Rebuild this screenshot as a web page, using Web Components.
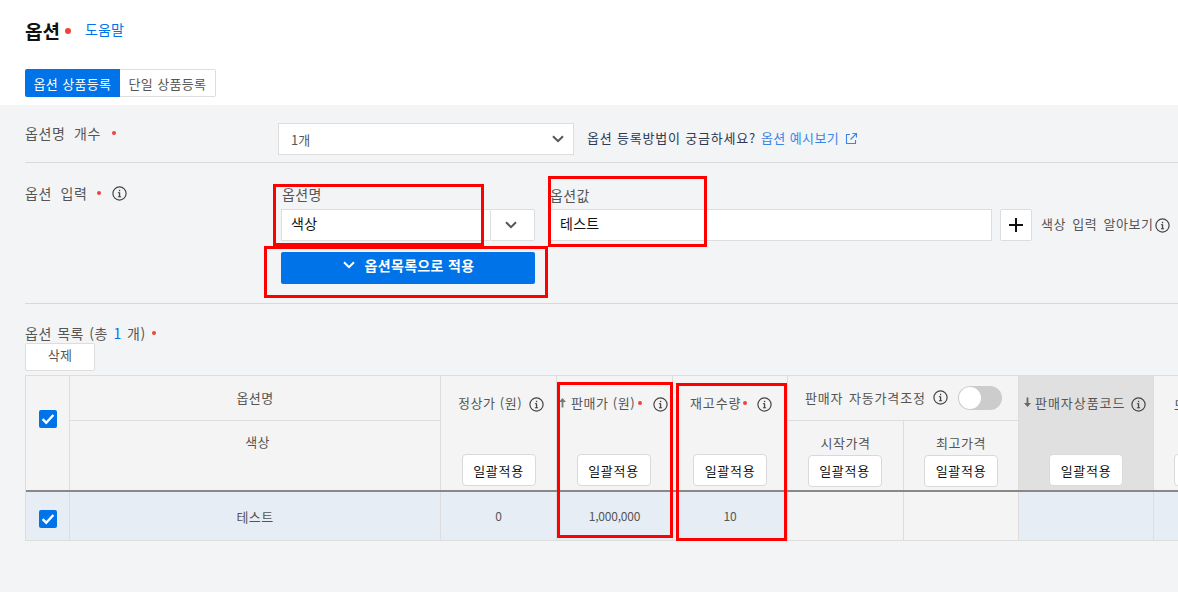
<!DOCTYPE html>
<html lang="ko"><head><meta charset="utf-8"><title>옵션</title>
<style>
html,body{margin:0;padding:0;background:#f3f4f6}
body{width:1178px;height:592px;overflow:hidden;font:13px "Noto Sans CJK KR","Noto Sans",sans-serif;color:#555}
</style></head><body>
<option-page></option-page>
<script>
const FONT='"Noto Sans CJK KR","Noto Sans",sans-serif';
function def(name,css,html){
  customElements.define(name,class extends HTMLElement{
    constructor(){super();const s=this.attachShadow({mode:'open'});
      s.innerHTML=`<style>${css}</style>${typeof html==='function'?html(this):html}`;}
  });
}
def('info-icon',':host{display:inline-flex;width:15px;height:15px;flex:none}svg{display:block}',
 `<svg width="15" height="15" viewBox="0 0 15 15" fill="none"><circle cx="7.5" cy="7.5" r="6.6" stroke="#444" stroke-width="1.2"/><rect x="6.9" y="6.4" width="1.3" height="4.6" fill="#444"/><rect x="6.9" y="3.8" width="1.3" height="1.4" fill="#444"/><rect x="5.9" y="6.2" width="1.6" height="1" fill="#444"/><rect x="5.9" y="10.3" width="3.2" height="1" fill="#444"/></svg>`);
def('red-dot',':host{display:inline-block;width:var(--d,4px);height:var(--d,4px);border-radius:50%;background:#f0443a;flex:none}','');
def('chev-icon',':host{display:inline-flex}svg{display:block}',
 e=>`<svg width="12" height="8" viewBox="0 0 12 8" fill="none"><path d="M1 1.2 6 6.2 11 1.2" stroke="${e.getAttribute('color')||'#555'}" stroke-width="2"/></svg>`);
def('check-box',':host{display:inline-flex;width:18px;height:18px;border-radius:2px;background:#0073e9;align-items:center;justify-content:center}svg{display:block}',
 `<svg width="14" height="12" viewBox="0 0 14 12" fill="none"><path d="M1.6 6.2 5.2 9.7 12.4 2" stroke="#fff" stroke-width="2.4"/></svg>`);
def('bulk-button',`:host{display:inline-flex;box-sizing:border-box;width:74px;height:32px;align-items:center;justify-content:center;background:#fff;border:1px solid #d9d9d9;border-radius:4px;color:#111;font-size:13px;letter-spacing:.7px;flex:none}`,'<slot></slot>');
def('page-header',`:host{display:block;background:#fff;height:105px;box-sizing:border-box;padding:17px 25px 0}
 .t{display:flex;align-items:center;height:28px}
 h1{margin:0;font-size:19px;font-weight:700;color:#111;line-height:28px}
 red-dot{--d:6px;margin:0 14px 0 5px}
 a{color:#0073e9;font-size:14px;text-decoration:none;letter-spacing:.15px;padding-bottom:4px}
 .tabs{display:flex;margin-top:24px;height:28px}
 .tabs div{box-sizing:border-box;height:28px;display:flex;align-items:center;justify-content:center;font-size:13px;letter-spacing:.35px}
 .on{width:95px;background:#0073e9;color:#fff;border-radius:2px 0 0 2px}
 .off{width:96px;background:#fff;color:#555;border:1px solid #ddd;border-left:0;border-radius:0 2px 2px 0}`,
 `<div class="t"><h1>옵션</h1><red-dot></red-dot><a>도움말</a></div>
  <div class="tabs"><div class="on">옵션 상품등록</div><div class="off">단일 상품등록</div></div>`);
def('count-row',`:host{display:grid;grid-template-columns:253px 296px auto;height:58px;box-sizing:border-box;margin-left:25px;padding-top:18px;border-bottom:1px solid #d9d9d9}
 .l{display:flex;align-items:flex-start;height:20px;line-height:20px;font-size:14px;letter-spacing:.6px;word-spacing:4px;color:#555}
 .l red-dot{margin:8px 0 0 11px}
 .sel{box-sizing:border-box;height:32px;background:#fff;border:1px solid #ddd;display:flex;align-items:center;justify-content:space-between;padding:0 9px 0 12px;color:#555}
 .h{display:flex;align-items:center;height:32px;box-sizing:border-box;padding-bottom:3px;margin-left:13px;color:#2c3a55;letter-spacing:.8px;white-space:nowrap}
 .h a{color:#3a86e8;margin-left:5px;letter-spacing:.4px}
 .h svg{margin:2px 0 0 6px}`,
 `<div class="l">옵션명 개수<red-dot></red-dot></div>
  <div class="sel">1개<chev-icon></chev-icon></div>
  <div class="h">옵션 등록방법이 궁금하세요?<a>옵션 예시보기</a><svg width="13" height="13" viewBox="0 0 13 13" fill="none" stroke="#3a86e8" stroke-width="1.1"><path d="M5 2.5H1.5V11.5H10.5V8"/><path d="M5.5 7.5 11.5 1.5M7.5 1.5H11.5V5.5"/></svg></div>`);
def('input-row',`:host{display:block;height:141px;box-sizing:border-box;margin-left:25px;border-bottom:1px solid #d9d9d9}
 .g{display:grid;grid-template-columns:256px 209px 45px 15px 442px 8px 32px auto;grid-template-rows:46px 32px 11px 32px}
 .l{grid-column:1;grid-row:1 / 3;display:flex;align-items:flex-start;padding-top:20px;height:20px;line-height:20px;font-size:14px;letter-spacing:.6px;word-spacing:4px}
 .l red-dot{margin:8px 0 0 10px}.l info-icon{margin:3px 0 0 11px}
 .cap{align-self:end;line-height:18px;height:18px;margin-bottom:5px;white-space:nowrap;font-size:14px;letter-spacing:.4px}
 .i{box-sizing:border-box;height:32px;background:#fff;border:1px solid #ddd;display:flex;align-items:center;padding-left:9px;color:#111;font-size:14px;letter-spacing:.3px;padding-bottom:5px}
 .b{box-sizing:border-box;height:32px;background:#fff;border:1px solid #ddd;border-radius:2px;display:flex;align-items:center;justify-content:center}
 .side{display:flex;align-items:center;margin-left:9px;white-space:nowrap;letter-spacing:.55px;word-spacing:2px;height:32px;box-sizing:border-box;padding-bottom:4px}
 .side info-icon{margin:4px 0 0 2px}
 .go{grid-column:2 / 4;grid-row:4;background:#0073e9;color:#fff;font-weight:700;font-size:14px;display:flex;align-items:center;justify-content:center;border-radius:2px;letter-spacing:.35px;gap:9px;padding:0 0 6px 2px;box-sizing:border-box;height:32px}`,
 `<div class="g">
   <div class="l">옵션 입력<red-dot></red-dot><info-icon></info-icon></div>
   <div class="cap" style="grid-column:2;grid-row:1;padding-left:1px;margin-bottom:6px">옵션명</div>
   <div class="cap" style="grid-column:5;grid-row:1">옵션값</div>
   <div class="i" style="grid-column:2;grid-row:2;border-right:0;padding-bottom:4px">색상</div>
   <div class="b" style="grid-column:3;grid-row:2;padding-right:4px"><chev-icon></chev-icon></div>
   <div class="i" style="grid-column:5;grid-row:2">테스트</div>
   <div class="b" style="grid-column:7;grid-row:2"><svg width="16" height="16" viewBox="0 0 16 16"><path d="M8 1V15M1 8H15" stroke="#111" stroke-width="2"/></svg></div>
   <div class="side" style="grid-column:8;grid-row:2">색상 입력 알아보기<info-icon></info-icon></div>
   <div class="go"><chev-icon color="#fff"></chev-icon>옵션목록으로 적용</div>
  </div>`);
def('option-table',`:host{display:block;margin-left:25px;overflow:hidden;width:1153px}
 .g{display:grid;width:1300px;grid-template-columns:44px 371px 116px 116px 115px 116px 115px 135px 1fr;grid-template-rows:45px 69px 2px 48px;border-top:1px solid #ddd;border-bottom:1px solid #ddd;border-left:1px solid #ddd;background:#f4f4f4;box-sizing:border-box;height:166px}
 .c{border-right:1px solid #ddd;box-sizing:border-box;display:flex;align-items:center;justify-content:center;min-width:0;white-space:nowrap}
 .bt{border-bottom:1px solid #ddd}
 .col{flex-direction:column;justify-content:flex-start;grid-row:1 / 3}
 .hd{height:56px;display:flex;align-items:center;justify-content:flex-start;letter-spacing:.55px;width:100%;box-sizing:border-box}
 .hd .w{display:flex;align-items:center;padding-bottom:3px}
 .hd red-dot{--d:4px}
 .col bulk-button{margin-top:22px}
 .rule{grid-column:1 / -1;grid-row:3;background:#888}
 .r{background:#e7edf5;border-right:1px solid #ddd;grid-row:4;display:flex;align-items:center;justify-content:center;font-size:12px;letter-spacing:-.2px;padding-bottom:2px;box-sizing:border-box}
 .r.p{background:#f4f4f4}
 .sub{flex-direction:column;padding-top:13px;justify-content:flex-start;gap:3px;letter-spacing:.6px;line-height:18px}
 .auto{justify-content:flex-start;padding-left:17px;letter-spacing:.85px;word-spacing:1px}
 .auto info-icon{margin:0 10px 0 7px}
 .tog{width:44px;height:24px;border-radius:12px;background:#ccc;position:relative;flex:none;margin-top:2px}
 .tog i{position:absolute;left:1px;top:1px;width:22px;height:22px;border-radius:50%;background:#fff}`,
 `<div class="g">
  <div class="c" style="grid-column:1;grid-row:1 / 3;padding-bottom:28px"><check-box></check-box></div>
  <div class="c bt" style="grid-column:2;grid-row:1;padding-bottom:2px;letter-spacing:.4px">옵션명</div>
  <div class="c" style="grid-column:2;grid-row:2;align-items:flex-start;padding:11px 0 0 5px;letter-spacing:.4px">색상</div>
  <div class="c col" style="grid-column:3"><div class="hd" style="padding-left:17px"><span class="w">정상가 (원)</span><info-icon style="margin-left:7px"></info-icon></div><bulk-button>일괄적용</bulk-button></div>
  <div class="c col" style="grid-column:4"><div class="hd" style="padding-left:1px"><span class="w"><svg width="9" height="11" viewBox="0 0 9 11" style="margin-right:4px"><path d="M4.5 1 1 5H3.6V10.5H5.4V5H8Z" fill="#777"/></svg>판매가 (원)<red-dot style="margin-left:3px"></red-dot></span><info-icon style="margin-left:11px"></info-icon></div><bulk-button style="margin-right:2px">일괄적용</bulk-button></div>
  <div class="c col" style="grid-column:5"><div class="hd" style="padding-left:17px;letter-spacing:.9px"><span class="w">재고수량<red-dot style="margin-left:2px"></red-dot></span><info-icon style="margin-left:10px"></info-icon></div><bulk-button>일괄적용</bulk-button></div>
  <div class="c bt auto" style="grid-column:6 / 8;grid-row:1;padding-bottom:2px"><span>판매자 자동가격조정</span><info-icon></info-icon><span class="tog"><i></i></span></div>
  <div class="c sub" style="grid-column:6;grid-row:2">시작가격<bulk-button style="margin-right:2px">일괄적용</bulk-button></div>
  <div class="c sub" style="grid-column:7;grid-row:2">최고가격<bulk-button>일괄적용</bulk-button></div>
  <div class="c col" style="grid-column:8;background:#e0e0e0"><div class="hd" style="padding-left:4px;letter-spacing:.95px"><span class="w"><svg width="9" height="11" viewBox="0 0 9 11" style="margin-right:3px"><path d="M4.5 10 1 6H3.6V.5H5.4V6H8Z" fill="#666"/></svg>판매자상품코드</span><info-icon style="margin-left:6px"></info-icon></div><bulk-button>일괄적용</bulk-button></div>
  <div class="c col" style="grid-column:9;border-right:0"><div class="hd" style="padding-left:20px">모델명</div><bulk-button style="align-self:flex-start;margin-left:20px">일괄적용</bulk-button></div>
  <div class="rule"></div>
  <div class="r" style="grid-column:1;padding:6px 0 0"><check-box></check-box></div>
  <div class="r" style="grid-column:2;font-size:13px;letter-spacing:.4px;padding-bottom:0">테스트</div>
  <div class="r" style="grid-column:3">0</div>
  <div class="r" style="grid-column:4">1,000,000</div>
  <div class="r" style="grid-column:5">10</div>
  <div class="r p" style="grid-column:6"></div>
  <div class="r p" style="grid-column:7"></div>
  <div class="r" style="grid-column:8"></div>
  <div class="r" style="grid-column:9;border-right:0"></div>
 </div>`);
def('list-head',`:host{display:block;margin:21px 0 0 25px}
 .t{display:flex;align-items:flex-start;height:18px;font-size:14px;letter-spacing:.5px;word-spacing:1px}
 .t span{line-height:16px}
 b{font-weight:400;color:#0073e9}
 red-dot{margin:6px 0 0 6px}
 .d{box-sizing:border-box;width:70px;height:28px;background:#fff;border:1px solid #ddd;border-radius:2px;text-align:center;line-height:22px;letter-spacing:.3px}`,
 `<div class="t"><span>옵션 목록 (총 <b>1</b> 개)</span><red-dot></red-dot></div><div class="d">삭제</div>`);
def('mark-box',`:host{position:absolute;box-sizing:border-box;border:3px solid #f00;pointer-events:none}`,'');
def('option-page',`:host{display:block;position:relative;width:1178px;height:592px;font:13px ${FONT};color:#555}
 option-table{margin-top:4px}`,
 `<page-header></page-header><count-row></count-row><input-row></input-row><list-head></list-head><option-table></option-table>
 <mark-box style="left:273px;top:184px;width:211px;height:62px"></mark-box>
 <mark-box style="left:548px;top:176px;width:159px;height:71px"></mark-box>
 <mark-box style="left:264px;top:246px;width:284px;height:52px"></mark-box>
 <mark-box style="left:557px;top:382px;width:116px;height:156px"></mark-box>
 <mark-box style="left:676px;top:383px;width:111px;height:158px"></mark-box>`);
</script>
</body></html>
